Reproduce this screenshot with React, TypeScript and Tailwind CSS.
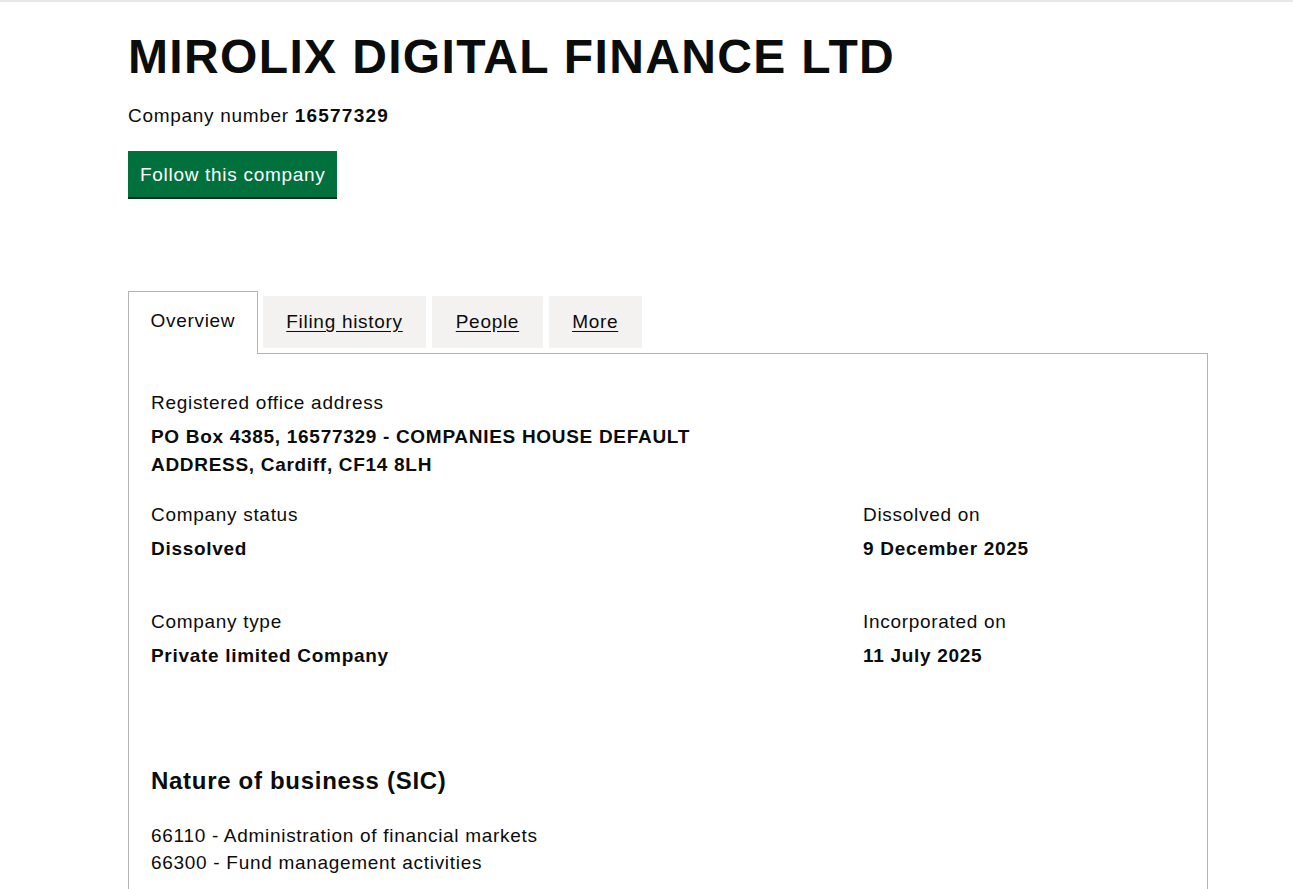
import { useState } from 'react';

const TABS = ['Overview', 'Filing history', 'People', 'More'];

const SIC_CODES = [
  '66110 - Administration of financial markets',
  '66300 - Fund management activities',
];

const Field = ({ label, value }: { label: string; value: string }) => (
  <dl>
    <dt className="text-[19px] leading-[25px]">{label}</dt>
    <dd className="mt-[9px] text-[19px] font-bold leading-[25px]">{value}</dd>
  </dl>
);

export default function App() {
  const [activeTab, setActiveTab] = useState('Overview');

  return (
    <div className="min-h-[889px] border-t-2 border-[#e8e8e8] bg-white font-['Liberation_Sans',Arial,sans-serif] tracking-[0.7px] text-[#0b0c0c]">
      <main className="ml-[128px] w-[1080px] pt-[27px]">
        <h1 className="text-[48px] font-bold leading-[56px] tracking-[1.35px]">
          MIROLIX DIGITAL FINANCE LTD
        </h1>
        <p className="mt-[18px] text-[19px] leading-[25px]">
          Company number <strong className="font-bold tracking-[1.2px]">16577329</strong>
        </p>
        <button
          type="button"
          className="mt-[23px] h-[46px] bg-[#00703c] px-[12px] text-[19px] leading-[25px] text-white shadow-[0_2px_0_#002d18]"
        >
          Follow this company
        </button>

        <div className="mt-[94px]">
          <ul className="flex items-end">
            {TABS.map((tab) =>
              tab === activeTab ? (
                <li
                  key={tab}
                  className="relative -mb-px mr-[5px] border border-b-0 border-[#b1b4b6] bg-white px-[21.5px] pb-[20px] pt-[16px]"
                >
                  <span className="text-[19px] leading-[25px]">{tab}</span>
                </li>
              ) : (
                <li
                  key={tab}
                  className="mb-[5px] mr-[6px] bg-[#f3f2f1] px-[23.5px] pb-[13px] pt-[13px]"
                >
                  <a
                    href="#"
                    onClick={(e) => {
                      e.preventDefault();
                      setActiveTab(tab);
                    }}
                    className="text-[19px] leading-[25px] text-[#0b0c0c] underline underline-offset-[3px]"
                  >
                    {tab}
                  </a>
                </li>
              ),
            )}
          </ul>
          <section className="h-[540px] border border-[#b1b4b6] px-[22px] pt-[36px]">
            <dl>
              <dt className="text-[19px] leading-[25px]">Registered office address</dt>
              <dd className="mt-[8px] w-[570px] text-[19px] font-bold leading-[28px]">
                PO Box 4385, 16577329 - COMPANIES HOUSE DEFAULT ADDRESS, Cardiff, CF14 8LH
              </dd>
            </dl>

            <div className="mt-[23px] grid grid-cols-[712px_1fr] gap-y-[48px]">
              <Field label="Company status" value="Dissolved" />
              <Field label="Dissolved on" value="9 December 2025" />
              <Field label="Company type" value="Private limited Company" />
              <Field label="Incorporated on" value="11 July 2025" />
            </div>

            <h2 className="mt-[98px] text-[24px] font-bold leading-[30px]">
              Nature of business (SIC)
            </h2>
            <ul className="mt-[26px]">
              {SIC_CODES.map((code) => (
                <li key={code} className="text-[19px] leading-[27px]">
                  {code}
                </li>
              ))}
            </ul>
          </section>
        </div>
      </main>
    </div>
  );
}
